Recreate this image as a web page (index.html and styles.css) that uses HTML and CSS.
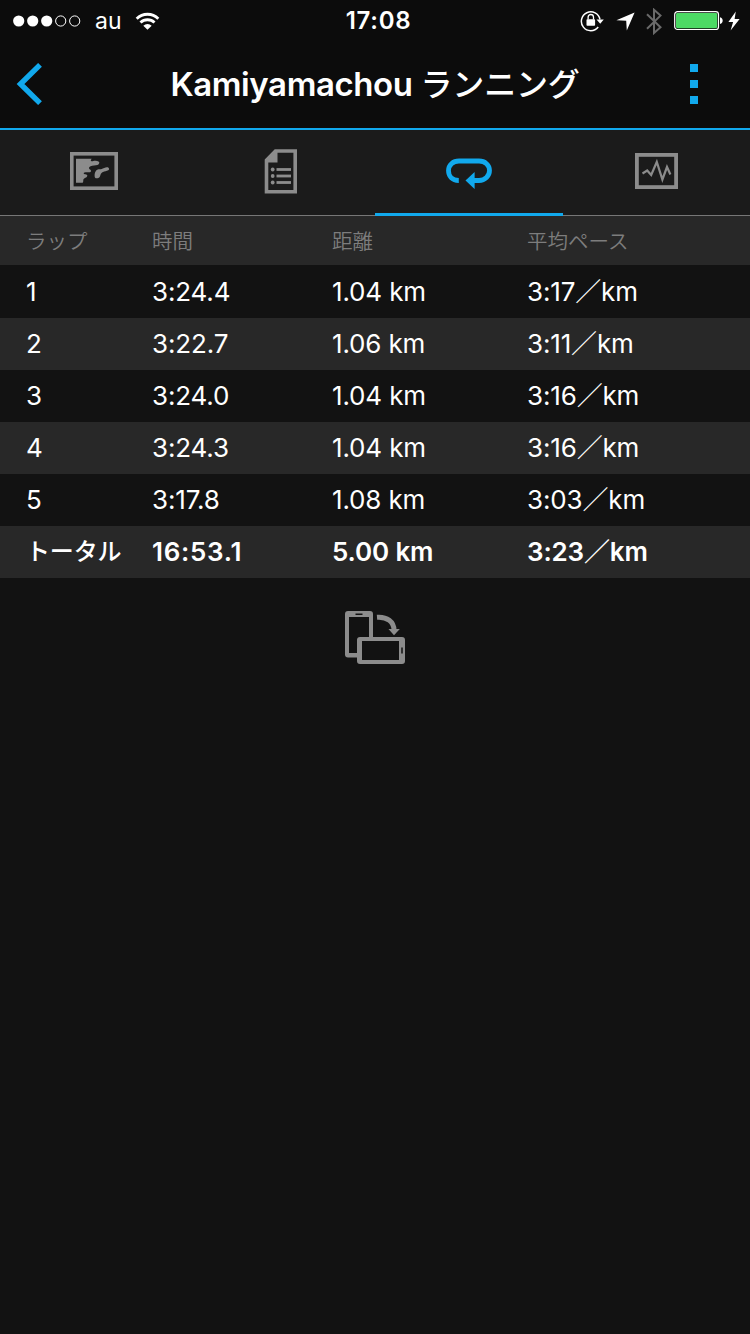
FILE: index.html
```html
<!DOCTYPE html>
<html lang="ja">
<head>
  <meta charset="UTF-8">
  <meta name="viewport" content="width=device-width, initial-scale=1.0">
  <title>Kamiyamachou ランニング</title>
  <link rel="stylesheet" href="styles.css">
</head>
<body>
  <header class="header">
    <div class="status-bar">
      <div class="status-left">
        <svg class="signal" width="68" height="12" viewBox="0 0 68 12">
          <g fill="#fff">
            <circle cx="5.7" cy="6" r="5.6"/>
            <circle cx="19.7" cy="6" r="5.6"/>
            <circle cx="33.7" cy="6" r="5.6"/>
          </g>
          <g fill="none" stroke="#fff" stroke-width="1">
            <circle cx="47.7" cy="6" r="5.1"/>
            <circle cx="61.7" cy="6" r="5.1"/>
          </g>
        </svg>
        <span class="carrier">au</span>
        <svg class="wifi" width="25" height="18" viewBox="0 0 26 19">
          <g fill="none" stroke="#fff" stroke-width="3">
            <path d="M1.6 7.1a16.2 16.2 0 0 1 22.8 0"/>
            <path d="M5.6 11.2a10.5 10.5 0 0 1 14.8 0"/>
          </g>
          <path d="M13 18.8l-4.4-4.4a6.2 6.2 0 0 1 8.8 0z" fill="#fff"/>
        </svg>
      </div>
      <span class="clock">17:08</span>
      <div class="status-right">
        <svg width="24" height="22" viewBox="0 0 24 22">
          <path d="M18.2 17A9.4 9.4 0 1 1 20 9.5" fill="none" stroke="#fff" stroke-width="1.5"/>
          <path d="M16.5 9.5h7.3l-3.6 4.2z" fill="#fff"/>
          <rect x="6.5" y="9.2" width="8.6" height="6.6" rx=".8" fill="#fff"/>
          <path d="M8.1 9.5V7.2a2.7 2.7 0 0 1 5.4 0v2.3" fill="none" stroke="#fff" stroke-width="1.3"/>
        </svg>
        <svg class="location" width="19" height="19" viewBox="0 0 19 19">
          <path d="M18.6.4L10.8 18.4 10.2 8.8.4 8.2z" fill="#fff"/>
        </svg>
        <svg class="bluetooth" width="16" height="27" viewBox="0 0 16 27">
          <path d="M1 6.2l13.5 13L8 25V1.8l6.5 5.8L1 20.8" fill="none" stroke="#6a6a6a" stroke-width="2"/>
        </svg>
        <svg class="battery" width="50" height="20" viewBox="0 0 50 20">
          <rect x=".7" y=".7" width="43.8" height="17.8" rx="2.8" fill="none" stroke="#fff" stroke-width="1.2"/>
          <rect x="2" y="2" width="41.2" height="15.2" rx="1.4" fill="#4cd964"/>
          <path d="M46 6.2c3.6.6 3.6 6.2 0 6.8z" fill="#fff"/>
        </svg>
        <svg class="bolt" width="12" height="20" viewBox="0 0 12 20">
          <path d="M7.8.4L.4 11h4.7L2.6 19.5 11.6 8H6.6z" fill="#fff"/>
        </svg>
      </div>
    </div>
    <div class="nav-bar">
      <svg class="back" width="27" height="42" viewBox="0 0 27 42">
        <path d="M24 1.900L4.500 21 24 40.100" fill="none" stroke="#11a9ed" stroke-width="5.400"/>
      </svg>
      <h1 class="title">Kamiyamachou <span class="title-kana">ランニング</span></h1>
      <div class="menu">
        <i class="menu-dot"></i>
        <i class="menu-dot"></i>
        <i class="menu-dot"></i>
      </div>
    </div>
  </header>

  <nav class="tabs">
    <a class="tab">
      <svg width="48" height="38" viewBox="0 0 48 38">
        <rect x="1.8" y="1.8" width="44.4" height="34.4" fill="none" stroke="#8c8c8c" stroke-width="3.6"/>
        <g fill="#8c8c8c">
          <path d="M6 6.7H21.7C20.5 8 20.5 9.300 21.700 9.300C23 9.300 24 8.500 25.500 8.700C28 9 29.500 9.500 29.300 11C29 13 26.500 13.300 24 13.400C21.500 13.500 19 14.500 19 16C19 17.500 21 17.500 21 18.900C21 20.400 19 20.300 17 20.300C15 20.300 13.700 20.500 13.700 21.400C13.700 22.500 17.300 21.800 17.300 23.500C17.300 25.800 13.500 26 13.300 28C13.200 29 13.400 30 12.700 30.700H6z"/>
          <path d="M38.500 15.700C39.400 16.500 39.300 17.700 38.300 18.300C36.500 19.300 34.500 19.200 33 20.100C30 21.500 30.800 23.500 29.700 25C29 26 28 26.300 26.700 26.300C25.200 26.300 24.700 25.500 24.600 24C24.500 21.500 25.200 18.500 27.700 17.500C29 17 30.500 17.300 31.700 17C33.500 16.500 36.500 14.300 38.500 15.700z"/>
        </g>
      </svg>
    </a>
    <a class="tab">
      <svg width="34" height="45" viewBox="0 0 34 45">
        <path d="M11.500 2H31.200V42.800H2.500V11.300z" fill="none" stroke="#8c8c8c" stroke-width="3.600"/>
        <path d="M1.500 10.500L11 1h2.500v12.500h-12z" fill="#8c8c8c"/>
        <g fill="#8c8c8c">
          <circle cx="8.700" cy="20.500" r="1.900"/>
          <circle cx="8.700" cy="27" r="1.900"/>
          <circle cx="8.700" cy="33.500" r="1.900"/>
          <rect x="12.500" y="19.100" width="14.500" height="2.800"/>
          <rect x="12.500" y="25.600" width="14.500" height="2.800"/>
          <rect x="12.500" y="32.100" width="14.500" height="2.800"/>
        </g>
      </svg>
    </a>
    <a class="tab active">
      <svg width="46" height="31" viewBox="0 0 46 31">
        <path d="M12.800 22.500C6 22.500 2.500 18 2.500 12.500S7 3 13 3h20c6 0 10.500 4 10.500 9.500S39 22.500 33 22.500h-7" fill="none" stroke="#11a9ed" stroke-width="4.800"/>
        <path d="M19.500 22.500L28.600 14v17z" fill="#11a9ed"/>
      </svg>
    </a>
    <a class="tab">
      <svg width="43" height="36" viewBox="0 0 43 36">
        <rect x="1.900" y="1.900" width="39.200" height="32.200" fill="none" stroke="#8c8c8c" stroke-width="3.800"/>
        <path d="M7.500 20.500l4.700-3 4 4.500 5.600-13 5.600 17.500 4.600-12.500 3.400 7.500" fill="none" stroke="#8c8c8c" stroke-width="2.200"/>
      </svg>
    </a>
  </nav>

  <table class="laps">
    <thead>
      <tr><th>ラップ</th><th>時間</th><th>距離</th><th>平均ペース</th></tr>
    </thead>
    <tbody>
      <tr><td>1</td><td>3:24.4</td><td>1.04 km</td><td>3:17／km</td></tr>
      <tr><td>2</td><td>3:22.7</td><td>1.06 km</td><td>3:11／km</td></tr>
      <tr><td>3</td><td>3:24.0</td><td>1.04 km</td><td>3:16／km</td></tr>
      <tr><td>4</td><td>3:24.3</td><td>1.04 km</td><td>3:16／km</td></tr>
      <tr><td>5</td><td>3:17.8</td><td>1.08 km</td><td>3:03／km</td></tr>
      <tr class="total"><td>トータル</td><td>16:53.1</td><td>5.00 km</td><td>3:23／km</td></tr>
    </tbody>
  </table>

  <!-- rotate the phone for more columns -->
  <div class="rotate">
    <svg width="60" height="53" viewBox="0 0 60 53">
      <path fill-rule="evenodd" fill="#8c8c8c" d="M3 0h22a3 3 0 0 1 3 3v23h-4V6H4v36h8v4.500H3a3 3 0 0 1-3-3V3a3 3 0 0 1 3-3z"/>
      <path fill-rule="evenodd" fill="#8c8c8c" d="M15 26h42a3 3 0 0 1 3 3v21a3 3 0 0 1-3 3H15a3 3 0 0 1-3-3V29a3 3 0 0 1 3-3zM17 30v19h37V30z"/>
      <path d="M10.500 3.300h7M57 36.500v6" fill="none" stroke="#121212" stroke-width="1.500"/>
      <path d="M32 6.300c10-.8 17 4.500 17 13" fill="none" stroke="#8c8c8c" stroke-width="5"/>
      <path d="M43.500 18H54.800L49 24.300z" fill="#8c8c8c"/>
    </svg>
  </div>
</body>
</html>
```

FILE: styles.css
```css
* {
  box-sizing: border-box;
}
body {
  margin: 0;
  min-height: 1334px;
  background: #121212;
  color: #fff;
  font-family: Inter, "Noto Sans CJK JP", sans-serif;
}
svg {
  display: block;
  flex: none;
}
.header {
  height: 130px;
  background: #0c0c0c;
  border-bottom: 2px solid #11a9ed;
}
.status-bar {
  display: grid;
  grid-template-columns: 1fr auto 1fr;
  align-items: center;
  height: 42px;
  padding: 0 10px 0 13px;
}
.status-left,
.status-right {
  display: flex;
  align-items: center;
}
.status-left {
  padding-bottom: 1px;
}
.status-right {
  justify-content: flex-end;
}
.carrier {
  margin-left: 14px;
  font-size: 23px;
  line-height: 38px;
}
.wifi {
  margin-left: 13px;
}
.clock {
  padding-left: 4px;
  padding-bottom: 1px;
  font-size: 24px;
  font-weight: 600;
  letter-spacing: 0.7px;
}
.location {
  margin-left: 12px;
}
.bluetooth {
  margin-left: 11px;
}
.battery {
  margin-left: 12px;
}
.bolt {
  margin-left: 4px;
}
.nav-bar {
  display: grid;
  grid-template-columns: 84px 1fr 100px;
  align-items: center;
  height: 84px;
  padding-left: 16px;
}
.title {
  margin: 0;
  font-size: 33px;
  font-weight: 600;
  letter-spacing: -0.4px;
  line-height: 44px;
  text-align: center;
  white-space: nowrap;
}
.title-kana {
  font-size: 32px;
  font-weight: 500;
  letter-spacing: -0.2px;
}
.menu {
  display: flex;
  flex-direction: column;
  gap: 8px;
  padding-left: 40px;
}
.menu-dot {
  width: 8px;
  height: 8px;
  background: #11a9ed;
}
.tabs {
  display: grid;
  grid-template-columns: repeat(4, 1fr);
  height: 86px;
  background: #1b1b1b;
  border-bottom: 1px solid #777;
}
.tab {
  display: flex;
  justify-content: center;
  align-items: center;
  height: 86px;
  padding-bottom: 4px;
}
.tab.active {
  padding-top: 3px;
  padding-bottom: 0;
  border-bottom: 3px solid #11a9ed;
}
.laps {
  width: 100%;
  table-layout: fixed;
  border-collapse: collapse;
  font-size: 26px;
  letter-spacing: -0.15px;
}
.laps th,
.laps td {
  height: 52px;
  padding: 0;
  line-height: 52px;
  text-align: left;
  white-space: nowrap;
}
.laps th {
  width: 180px;
  height: 49px;
  padding-top: 3px;
  color: #7d7d7d;
  font-size: 20.5px;
  font-weight: 350;
  letter-spacing: 0;
  line-height: 46px;
}
.laps th:first-child {
  width: 152px;
}
.laps th:nth-child(3) {
  width: 195px;
}
.laps th:last-child {
  width: 223px;
}
.laps th:first-child,
.laps td:first-child {
  padding-left: 26px;
}
.laps thead tr,
.laps tbody tr:nth-child(even) {
  background: #282828;
}
.laps tbody tr:first-child td {
  height: 53px;
}
.laps .total td {
  font-weight: 600;
}
.laps .total td:first-child {
  font-size: 24px;
  font-weight: 500;
}
.laps .total td:nth-child(2) {
  letter-spacing: 0.7px;
}
.rotate {
  display: flex;
  justify-content: center;
  padding-top: 33px;
}
```
